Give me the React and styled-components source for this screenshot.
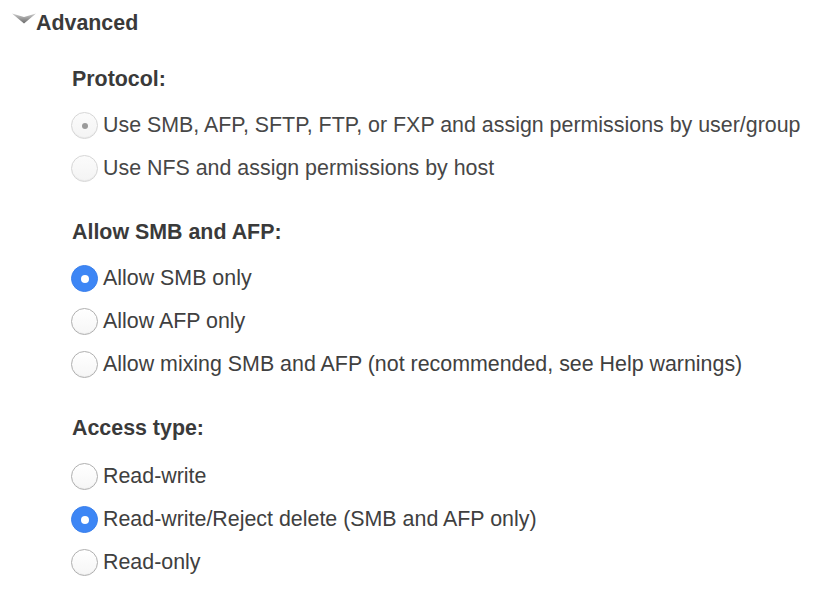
import React from "react";
import styled, { createGlobalStyle } from "styled-components";

const Global = createGlobalStyle`
  html, body { margin: 0; padding: 0; background: #fff; }
  body { font-family: "Liberation Sans", Arial, Helvetica, sans-serif; color: #404040; }
`;

const Page = styled.div`
  width: 818px;
  height: 590px;
  overflow: hidden;
  background: #fff;
  padding-top: 1px;
  box-sizing: border-box;
`;

const Header = styled.div`
  display: flex;
  align-items: center;
  height: 44px;
  padding-left: 12px;
`;

const ChevronBox = styled.span`
  display: flex;
  flex: none;
  margin-top: -9px;
`;

const HeaderTitle = styled.span`
  font-size: 21.4px;
  font-weight: 700;
  color: #3a3a3a;
  line-height: 24px;
`;

const Content = styled.div`
  padding-left: 71px;
`;

const Section = styled.section`
  margin-top: ${(p) => p.$top}px;
`;

const Heading = styled.div`
  font-size: 21.4px;
  font-weight: 700;
  color: #3a3a3a;
  line-height: 24px;
  margin: 0 0 ${(p) => p.$gap}px 1px;
`;

const Row = styled.label`
  display: flex;
  align-items: center;
  height: 43px;
  font-size: 21.4px;
  color: ${(p) => (p.$disabled ? "#474747" : "#404040")};
`;

const Circle = styled.span`
  box-sizing: border-box;
  width: 27px;
  height: 27px;
  border-radius: 50%;
  margin-right: 5px;
  flex: none;
  display: flex;
  align-items: center;
  justify-content: center;
  background: ${(p) =>
    p.$checked && !p.$disabled
      ? "#3d86f5"
      : p.$disabled
      ? "linear-gradient(#fbfbfb, #f4f4f4)"
      : "linear-gradient(#ffffff, #f6f6f6)"};
  border: 1px solid
    ${(p) =>
      p.$checked && !p.$disabled ? "#3a80ec" : p.$disabled ? "#d6d6d6" : "#b0b0b0"};
  box-shadow: ${(p) =>
    p.$checked && !p.$disabled ? "none" : "inset 0 -1px 0 rgba(0,0,0,0.04)"};
`;

const Dot = styled.span`
  width: ${(p) => (p.$disabled ? 6 : 8)}px;
  height: ${(p) => (p.$disabled ? 6 : 8)}px;
  border-radius: 50%;
  background: ${(p) => (p.$disabled ? "#9a9a9a" : "#ffffff")};
`;

const Chevron = () => (
  <ChevronBox>
    <svg width="24" height="11" viewBox="0 0 24 11">
      <defs>
        <linearGradient id="chg" x1="0" y1="0" x2="0" y2="1">
          <stop offset="0" stopColor="#cccccc" />
          <stop offset="1" stopColor="#6a6a6a" />
        </linearGradient>
      </defs>
      <polygon points="0,0.5 12,10.5 24,0.5 12,4" fill="url(#chg)" />
    </svg>
  </ChevronBox>
);

const Radio = ({ checked, disabled, children }) => (
  <Row $disabled={disabled}>
    <Circle $checked={checked} $disabled={disabled}>
      {checked && <Dot $disabled={disabled} />}
    </Circle>
    {children}
  </Row>
);

const groups = [
  {
    title: "Protocol:",
    top: 22,
    gap: 13,
    disabled: true,
    options: [
      ["Use SMB, AFP, SFTP, FTP, or FXP and assign permissions by user/group", true],
      ["Use NFS and assign permissions by host", false],
    ],
  },
  {
    title: "Allow SMB and AFP:",
    top: 30,
    gap: 13,
    options: [
      ["Allow SMB only", true],
      ["Allow AFP only", false],
      ["Allow mixing SMB and AFP (not recommended, see Help warnings)", false],
    ],
  },
  {
    title: "Access type:",
    top: 30,
    gap: 15,
    options: [
      ["Read-write", false],
      ["Read-write/Reject delete (SMB and AFP only)", true],
      ["Read-only", false],
    ],
  },
];

export default function App() {
  return (
    <Page>
      <Global />
      <Header>
        <Chevron />
        <HeaderTitle>Advanced</HeaderTitle>
      </Header>
      <Content>
        {groups.map((g) => (
          <Section key={g.title} $top={g.top}>
            <Heading $gap={g.gap}>{g.title}</Heading>
            {g.options.map(([label, checked]) => (
              <Radio key={label} checked={checked} disabled={g.disabled}>
                {label}
              </Radio>
            ))}
          </Section>
        ))}
      </Content>
    </Page>
  );
}
